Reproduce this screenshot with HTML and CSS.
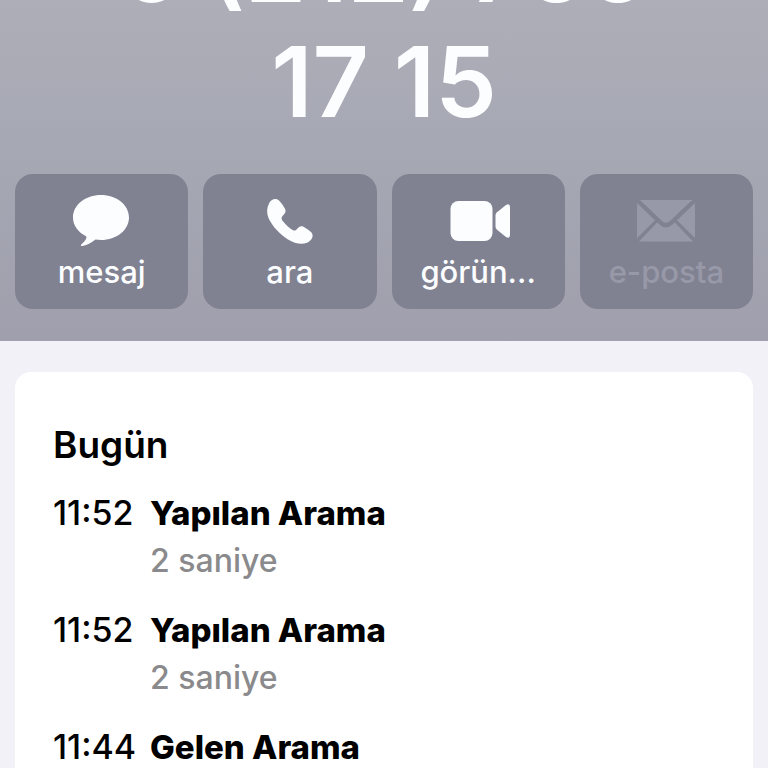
FILE: index.html
```html
<!DOCTYPE html>
<html lang="tr">
<head>
<meta charset="utf-8">
<meta name="viewport" content="width=device-width, initial-scale=1">
<title>0 (212) 755 17 15</title>
<link rel="stylesheet" href="styles.css">
</head>
<body>
<header class="contact">
  <h1 class="number">0 (212) 755<br>17 15</h1>
  <div class="actions">
    <button class="action" type="button">
      <svg class="icon" viewBox="0 0 64 56" aria-hidden="true"><path d="M31 4C15.500 4 3 13.800 3 26.500C3 34.500 8 41 16 45.300C16.800 46 16.500 47 15.700 48.500C14.500 50.500 12.500 52.300 11.200 53.600C10.300 54.700 11 55.300 12.500 55C17.500 54.200 22 51.300 25.500 48.500C27 48.800 29 49 31 49C46.500 49 59 39.200 59 26.500S46.500 4 31 4Z"/></svg>
      <span>mesaj</span>
    </button>
    <button class="action" type="button">
      <svg class="icon" viewBox="0 0 64 56" aria-hidden="true"><path d="M11 12.500C13 8 18 6.500 21 9.500C23.500 12 25.500 15 27 17.800C28.500 21 26.500 23 24.500 25C23.200 26.500 23.300 28 24.500 29.700C27.500 33.500 31.500 37.500 35 39.300C36.700 40 37.800 39.500 38.800 38.300C40.500 36 42.500 34.300 45.500 35.700C48 37 51 39.200 53.300 41.300C56.500 45 53.500 50 49 51.800C43.500 54 36.500 52.500 30 48.500C22.500 44 14 35 10.500 27C8.500 22 8.700 17 11 12.500Z"/></svg>
      <span>ara</span>
    </button>
    <button class="action" type="button">
      <svg class="icon" viewBox="0 0 64 56" aria-hidden="true"><rect x="4.500" y="10" width="42" height="40" rx="8"/><path d="M49.500 24.500Q49.500 22.500 51 21.200L60 14Q64 12 64 16V44Q64 48 60 46L51 38.800Q49.500 37.500 49.500 35.500Z"/></svg>
      <span>görün...</span>
    </button>
    <button class="action" type="button" disabled>
      <svg class="icon" viewBox="0 0 64 56" aria-hidden="true"><path d="M6 9H59Q57.500 9.500 56 11L36.500 29.500Q32 34 27.500 29.500L8 11Q7 9.500 5.500 9ZM3 12L21 29.300L3 47ZM61 12V47L43 29.300ZM23.200 31.500L25.500 33.500Q32 39.500 38.500 33.500L40.800 31.500L59 50.500H5Z"/></svg>
      <span>e-posta</span>
    </button>
  </div>
</header>
<main class="card">
  <h2 class="day">Bugün</h2>
  <ul class="calls">
    <li class="call"><time>11:52</time><div><strong>Yapılan Arama</strong><p>2 saniye</p></div></li>
    <li class="call"><time>11:52</time><div><strong>Yapılan Arama</strong><p>2 saniye</p></div></li>
    <li class="call"><time>11:44</time><div><strong>Gelen Arama</strong></div></li>
  </ul>
</main>
</body>
</html>
```
FILE: styles.css
```css
* {
  box-sizing: border-box;
}

html {
  height: 100%;
  overflow: hidden;
}

body {
  margin: 0;
  height: 100%;
  display: flex;
  flex-direction: column;
  overflow: hidden;
  background: #f2f1f7;
  color: #000;
  font-family: Inter, "Liberation Sans", sans-serif;
}

.contact {
  flex: none;
  padding: 0 15px 32px;
  overflow: hidden;
  background: linear-gradient(#adaeb7, #a5a7b3 50%, #a09fad);
}

/* The first line of the number is scrolled past the top edge. */
.number {
  margin: -91px 0 35px;
  color: #fcfdff;
  font-size: 98px;
  font-weight: 600;
  line-height: 115px;
  text-align: center;
}

.actions {
  display: grid;
  grid-template-columns: repeat(4, 1fr);
  gap: 15px;
}

.action {
  display: flex;
  flex-direction: column;
  align-items: center;
  min-width: 0;
  padding: 17px 8px 12px;
  border: 0;
  border-radius: 18px;
  background: #808292;
  color: #fcfdff;
  font: 500 31px/50px Inter, "Liberation Sans", sans-serif;
}

.action:disabled {
  color: #9899a8;
}

.icon {
  width: 64px;
  height: 56px;
  fill: currentColor;
}

.card {
  flex: 1 0 auto;
  margin: 31px 15px 0;
  padding: 49px 38px 0;
  border-radius: 16px 16px 0 0;
  background: #fff;
}

.day {
  margin: 0 0 20px;
  font-size: 37px;
  font-weight: 600;
  line-height: 48px;
}

.calls {
  display: grid;
  gap: 21px;
  margin: 0;
  padding: 0;
  list-style: none;
}

.call {
  display: grid;
  grid-template-columns: 82px 1fr;
  gap: 15px;
  font-size: 32px;
  line-height: 48px;
}

.call strong {
  display: block;
  font-size: 33px;
  font-weight: 800;
}

.call time {
  font-size: 34px;
  font-weight: 500;
}

.call p {
  margin: 0;
  color: #8a8a8c;
  font-weight: 500;
}
```
